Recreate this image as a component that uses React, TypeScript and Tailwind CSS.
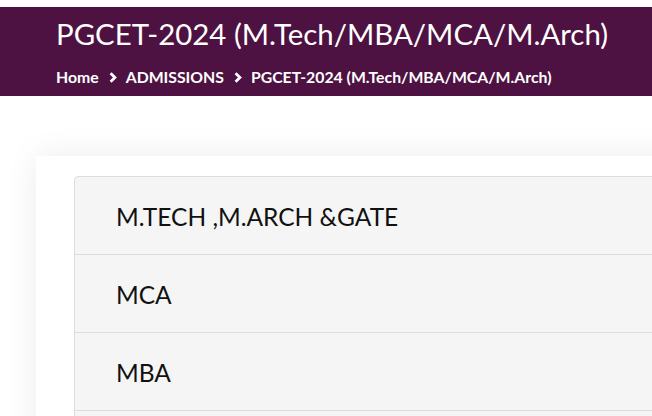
import React from 'react';

const items = ['M.TECH ,M.ARCH &GATE', 'MCA', 'MBA', ''];

const Chevron = () => (
  <svg width="8" height="11" viewBox="0 0 8 11" className="ml-[10px] mr-[9px] shrink-0">
    <path d="M1.6 1.3 L5.9 5.5 L1.6 9.7" fill="none" stroke="white" strokeWidth="2.8" />
  </svg>
);

export default function App() {
  return (
    <div className="w-[652px] h-[416px] overflow-hidden bg-white font-['Lato','Noto_Sans',sans-serif]">
      <div className="h-[7px] bg-white" />
      {/* Banner */}
      <div className="h-[89px] bg-[#4e1242] pl-[56px] pt-[9px]">
        <h1 className="text-[29.4px] leading-[36px] text-white whitespace-nowrap">PGCET-2024 (M.Tech/MBA/MCA/M.Arch)</h1>
        <div className="mt-[15px] flex items-center text-[15.8px] leading-[20px] font-bold text-white whitespace-nowrap">
          <span>Home</span>
          <Chevron />
          <span>ADMISSIONS</span>
          <Chevron />
          <span>PGCET-2024 (M.Tech/MBA/MCA/M.Arch)</span>
        </div>
      </div>

      {/* Content */}
      <div className="pt-[60px] pl-[36px]">
        <div className="w-[900px] bg-white shadow-[0_0_30px_rgba(0,0,0,0.08)] pt-[20px] pl-[38px]">
          <div className="border border-[#dddddd] rounded-[4px] bg-[#f5f5f5]">
            {items.map((t, i) => (
              <div
                key={i}
                className={`flex items-center pl-[41px] pt-[3px] text-[24.5px] text-[#111111] ${i > 0 ? 'h-[78px] border-t border-[#dddddd]' : 'h-[77px]'}`}
              >
                {t}
              </div>
            ))}
          </div>
        </div>
      </div>
    </div>
  );
}
